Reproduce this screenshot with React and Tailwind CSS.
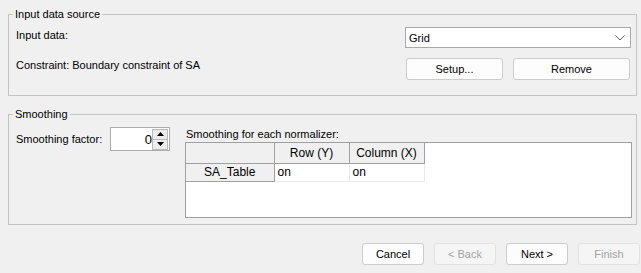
import React from 'react'

const font = { fontFamily: '"Liberation Sans", Arial, sans-serif' }

function Btn({ children, disabled, w }) {
    return (
        <button
            type="button"
            className={
                disabled
                    ? `${w} h-[22px] rounded-[3px] border border-[#e2e2e2] bg-[#f5f5f5] text-[11px] text-[#a3a3a3]`
                    : `${w} h-[22px] rounded-[3px] border border-[#cccccc] bg-[#fdfdfd] text-[11px] text-black`
            }
        >
            {children}
        </button>
    )
}

function Spinner() {
    return (
        <div className="flex h-[24px] w-[60px] items-center border border-[#adadad] bg-white pl-1 pr-[1px]">
            <div className="flex-1 text-right text-[13px] leading-none">0</div>
            <div className="flex h-[21px] w-[16px] flex-col">
                <div className="flex h-[11px] items-center justify-center border border-[#b9b9b9] bg-[#ececec]">
                    <svg width="7" height="4" viewBox="0 0 7 4"><path d="M0 4 L3.5 0 L7 4 Z" fill="#000" /></svg>
                </div>
                <div className="flex h-[10px] items-center justify-center border border-t-0 border-[#b9b9b9] bg-[#ececec]">
                    <svg width="7" height="4" viewBox="0 0 7 4"><path d="M0 0 L3.5 4 L7 0 Z" fill="#000" /></svg>
                </div>
            </div>
        </div>
    )
}

export default function App() {
    return (
        <div className="h-[273px] w-[641px] overflow-hidden bg-[#f0f0f0] pl-2 pt-[7px] text-[11px] leading-[14px] text-black" style={font}>
            {/* Input data source */}
            <fieldset className="w-[629px] border border-[#c4c4c4] pb-[15px] pl-[7px] pr-[5px]">
                <legend className="ml-[-3px] px-[2px] leading-[14px]">Input data source</legend>
                <div className="mt-[6px] flex items-start justify-between">
                    <div className="pt-[1px]">Input data:</div>
                    <div className="flex h-[21px] w-[226px] items-center justify-between border border-[#a9a9a9] bg-white pl-[3px] pr-[5px]">
                        <span>Grid</span>
                        <svg width="10" height="6" viewBox="0 0 10 6">
                            <path d="M0.5 0.5 L5 5 L9.5 0.5" fill="none" stroke="#606060" strokeWidth="1" />
                        </svg>
                    </div>
                </div>
                <div className="mt-[10px] flex items-start justify-between">
                    <div>Constraint: Boundary constraint of SA</div>
                    <div className="mr-[1px] flex gap-[10px]">
                        <Btn w="w-[97px]">Setup...</Btn>
                        <Btn w="w-[117px]">Remove</Btn>
                    </div>
                </div>
            </fieldset>

            {/* Smoothing */}
            <fieldset className="mt-[11px] w-[629px] border border-[#c4c4c4] pb-[6px] pl-[7px] pr-[4px]">
                <legend className="ml-[-3px] px-[2px] leading-[14px]">Smoothing</legend>
                <div className="mt-[6px] flex items-start">
                    <div className="flex items-center">
                        <div className="w-[94px] whitespace-nowrap">Smoothing factor:</div>
                        <Spinner />
                    </div>
                    <div className="ml-[15px] flex-1">
                        <div className="pl-[1px]">Smoothing for each normalizer:</div>
                        <div className="mt-[1px] h-[76px] border border-[#a0a0a0] bg-white text-[12px]">
                            <table className="table-fixed border-collapse">
                                <tbody>
                                    <tr className="h-[20px]">
                                        <td className="w-[88px] border-b border-r border-[#a0a0a0] bg-[#f0f0f0]"></td>
                                        <td className="w-[75px] border-b border-r border-[#a0a0a0] bg-[#f0f0f0] text-center">Row (Y)</td>
                                        <td className="w-[75px] border-b border-r border-[#a0a0a0] bg-[#f0f0f0] text-center">Column (X)</td>
                                    </tr>
                                    <tr className="h-[18px]">
                                        <td className="border-b border-r border-[#a0a0a0] bg-[#f0f0f0] text-center">SA_Table</td>
                                        <td className="border-b border-r border-[#ebebeb] pl-[3px]">on</td>
                                        <td className="border-b border-r border-[#ebebeb] pl-[3px]">on</td>
                                    </tr>
                                </tbody>
                            </table>
                        </div>
                    </div>
                </div>
            </fieldset>

            {/* Wizard buttons */}
            <div className="mt-[18px] flex justify-end gap-[10px] pr-[1px]">
                <Btn w="w-[62px]">Cancel</Btn>
                <Btn w="w-[62px]" disabled>&lt; Back</Btn>
                <Btn w="w-[62px]">Next &gt;</Btn>
                <Btn w="w-[62px]" disabled>Finish</Btn>
            </div>
        </div>
    )
}
